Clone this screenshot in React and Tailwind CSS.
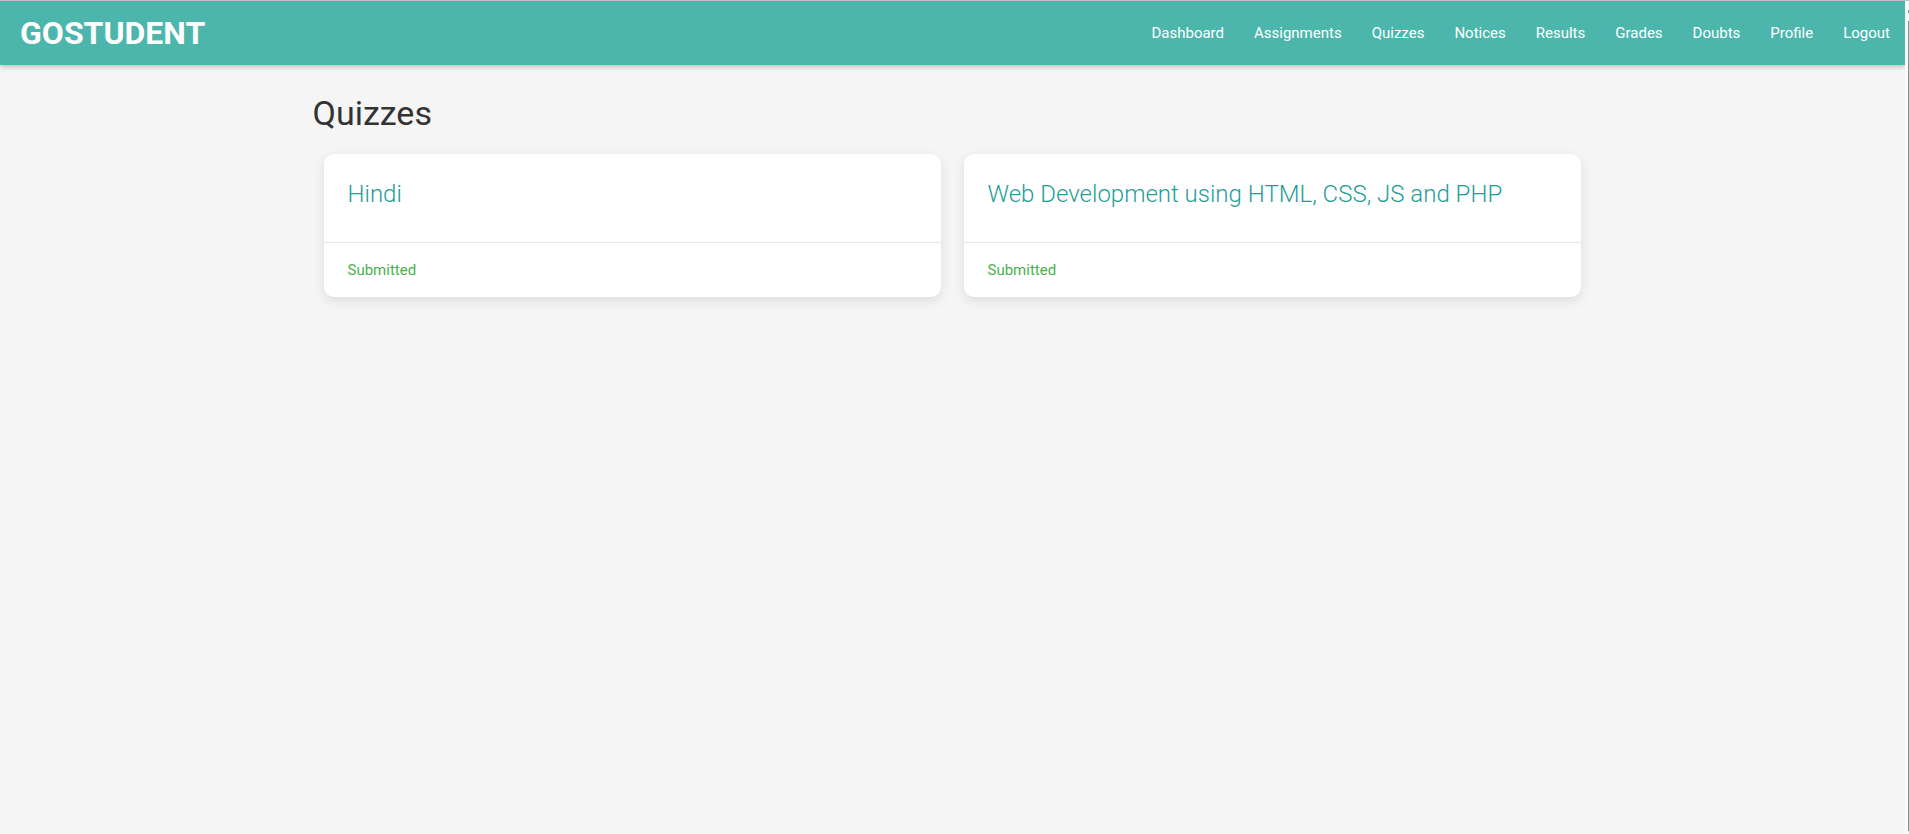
const links = [
  "Dashboard",
  "Assignments",
  "Quizzes",
  "Notices",
  "Results",
  "Grades",
  "Doubts",
  "Profile",
  "Logout",
];

const quizzes = [
  { title: "Hindi", status: "Submitted" },
  { title: "Web Development using HTML, CSS, JS and PHP", status: "Submitted" },
];

function NavBar() {
  return (
    <nav
      aria-label="Main"
      className="flex h-16 items-center justify-between bg-[#4db6ac] pl-5 text-white shadow-[0_2px_5px_rgba(0,0,0,0.22)]"
    >
      <a href="#home" className="text-[32px] font-bold">
        GOSTUDENT
      </a>
      <ul className="flex">
        {links.map((label) => (
          <li key={label}>
            <a href={"#" + label.toLowerCase()} className="block px-[15px] text-[15px] leading-[64px]">
              {label}
            </a>
          </li>
        ))}
      </ul>
    </nav>
  );
}

function QuizCard({ title, status }) {
  return (
    <article className="rounded-[10px] bg-white shadow-[0_4px_12px_rgba(0,0,0,0.1)]">
      <div className="p-6">
        <h2 className="mb-2 text-2xl leading-8 font-light text-[#1f9e96]">{title}</h2>
      </div>
      <div className="border-t border-[#e8e8e8] px-6 py-4">
        <p className="text-[15px] leading-[22px] text-[#4caf50]">{status}</p>
      </div>
    </article>
  );
}

function ScrollTrack() {
  return (
    <div aria-hidden="true" className="flex w-1 shrink-0 flex-col items-end bg-[#fcfcfc] pt-[9px] pb-[3px]">
      <div className="mb-2 h-[3px] w-px bg-[#8b8b8b]" />
      <div className="w-px grow bg-[#8b8b8b]" />
    </div>
  );
}

export default function App() {
  return (
    <div className="flex min-h-screen border-t border-[#c0c0c0] bg-[#f5f5f5] font-['Roboto',sans-serif]">
      <div className="min-w-0 grow overflow-hidden">
        <NavBar />
        <main className="mx-auto max-w-[1280px] pt-6">
          <h1 className="text-[34px] leading-[48px] text-[#333333]">Quizzes</h1>
          <div className="grid gap-[23px] pt-[17px] pr-3 pb-8 pl-[11px] md:grid-cols-2">
            {quizzes.map((quiz) => (
              <QuizCard key={quiz.title} title={quiz.title} status={quiz.status} />
            ))}
          </div>
        </main>
      </div>
      <ScrollTrack />
    </div>
  );
}
